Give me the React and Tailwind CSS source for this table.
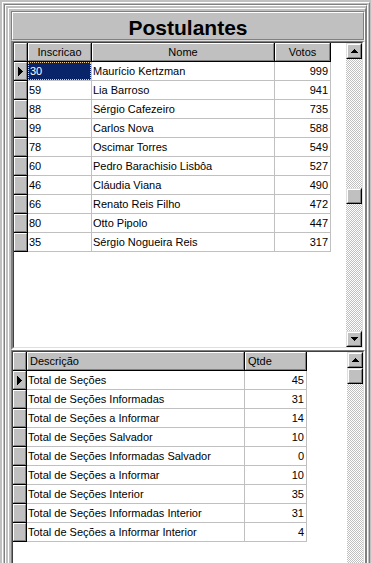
import React from "react";

const postulantes = [
  ["30", "Maurício Kertzman", "999"],
  ["59", "Lia Barroso", "941"],
  ["88", "Sérgio Cafezeiro", "735"],
  ["99", "Carlos Nova", "588"],
  ["78", "Oscimar Torres", "549"],
  ["60", "Pedro Barachisio Lisbôa", "527"],
  ["46", "Cláudia Viana", "490"],
  ["66", "Renato Reis Filho", "472"],
  ["80", "Otto Pipolo", "447"],
  ["35", "Sérgio Nogueira Reis", "317"],
];

const resumo = [
  ["Total de Seções", "45"],
  ["Total de Seções Informadas", "31"],
  ["Total de Seções a Informar", "14"],
  ["Total de Seções Salvador", "10"],
  ["Total de Seções Informadas Salvador", "0"],
  ["Total de Seções a Informar", "10"],
  ["Total de Seções Interior", "35"],
  ["Total de Seções Informadas Interior", "31"],
  ["Total de Seções a Informar Interior", "4"],
];

// fixed (grey 3D) cell used for titles and the row indicator
const Fixed = ({ w, align = "justify-center", children }) => (
  <div className={`shrink-0 h-full bg-[#c0c0c0] border-r border-b border-black ${w}`}>
    <div className={`flex h-full items-center border border-t-white border-l-white border-r-[#808080] border-b-[#808080] px-[2px] pt-px whitespace-nowrap ${align}`}>
      {children}
    </div>
  </div>
);

const Cell = ({ w, right, selected, children }) => (
  <div className={`shrink-0 h-full border-r border-b border-[#c0c0c0] ${w}`}>
    <div
      className={`flex h-full items-center px-[1px] pt-px whitespace-nowrap ${right ? "justify-end pr-[2px]" : ""} ${
        selected ? "bg-[#0a246a] text-white border border-dotted border-[#f0d09a]" : ""
      }`}
    >
      {children}
    </div>
  </div>
);

const Arrow = ({ up }) => (
  <svg width="7" height="4" viewBox="0 0 7 4" shapeRendering="crispEdges">
    {up ? (
      <>
        <rect x="3" y="0" width="1" height="1" />
        <rect x="2" y="1" width="3" height="1" />
        <rect x="1" y="2" width="5" height="1" />
        <rect x="0" y="3" width="7" height="1" />
      </>
    ) : (
      <>
        <rect x="0" y="0" width="7" height="1" />
        <rect x="1" y="1" width="5" height="1" />
        <rect x="2" y="2" width="3" height="1" />
        <rect x="3" y="3" width="1" height="1" />
      </>
    )}
  </svg>
);

const Btn = ({ children }) => (
  <div className="w-4 h-4 shrink-0 bg-[#c0c0c0] border border-t-[#dfdfdf] border-l-[#dfdfdf] border-r-black border-b-black">
    <div className="flex h-full w-full items-center justify-center border border-t-white border-l-white border-r-[#808080] border-b-[#808080]">
      {children}
    </div>
  </div>
);

const Track = ({ h }) => (
  <div
    className={`w-4 bg-[repeating-conic-gradient(#c0c0c0_0%_25%,#ffffff_0%_50%)] bg-[length:2px_2px] ${h}`}
  />
);

const Pointer = () => (
  <svg className="ml-px -mt-px" width="5" height="9" viewBox="0 0 5 9" shapeRendering="crispEdges">
    <path d="M0 0h1v9H0zM1 1h1v7H1zM2 2h1v5H2zM3 3h1v3H3zM4 4h1v1H4z" fill="black" />
  </svg>
);

export default function App() {
  return (
    <div className="w-[371px] h-[563px] overflow-hidden bg-[#c0c0c0] pt-[2px] pl-[2px] pr-[1px] font-['Liberation_Sans',Arial,sans-serif] text-[11px] text-black">
      <div className="border-t border-l border-r border-t-white border-l-white border-r-[#808080] p-[1px] pb-0">
        <div className="border-t border-l border-r border-t-[#808080] border-l-[#808080] border-r-white">
          <div className="border-t border-l border-r border-t-white border-l-white border-r-[#808080] pt-[2px] pl-[2px]">
            <div className="border-t border-l border-r border-t-white border-l-white border-r-[#808080] pt-[2px] pl-[2px]">
              {/* title */}
              <div className="h-[30px] border border-t-[#808080] border-l-[#808080] border-r-white border-b-[#dfdfdf]">
                <div className="flex h-full items-center justify-center border border-t-white border-l-white border-r-[#808080] border-b-[#808080] pt-[2px]">
                  <span className="text-[21px] font-bold leading-none">Postulantes</span>
                </div>
              </div>

              {/* postulantes grid */}
              <div className="border-2 border-t-[#808080] border-l-[#808080] border-r-white border-b-white border-t-[1px]">
                <div className="flex h-[306px] border-t border-l border-r border-b border-t-[#404040] border-l-[#404040] border-r-[#dfdfdf] border-b-[#dfdfdf]">
                  <div className="flex-1 bg-white">
                    <div className="flex h-[19px]">
                      <Fixed w="w-[14px]" />
                      <Fixed w="w-[64px]">Inscricao</Fixed>
                      <Fixed w="w-[183px]">Nome</Fixed>
                      <Fixed w="w-[56px]">Votos</Fixed>
                    </div>
                    {postulantes.map((r, i) => (
                      <div key={r[0]} className="flex h-[19px]">
                        <Fixed w="w-[14px]" align="justify-start">
                          {i === 0 && <Pointer />}
                        </Fixed>
                        <Cell w="w-[64px]" selected={i === 0}>{r[0]}</Cell>
                        <Cell w="w-[183px]">{r[1]}</Cell>
                        <Cell w="w-[56px]" right>{r[2]}</Cell>
                      </div>
                    ))}
                  </div>
                  <div className="flex w-4 flex-col">
                    <Btn><Arrow up /></Btn>
                    <Track h="h-[129px]" />
                    <Btn />
                    <Track h="flex-1" />
                    <Btn><Arrow /></Btn>
                  </div>
                </div>
              </div>

              {/* resumo grid */}
              <div className="border-t border-l border-r border-t-[#808080] border-l-[#808080] border-r-white">
                <div className="flex h-[230px] border-t border-l border-r border-t-[#404040] border-l-[#404040] border-r-[#dfdfdf]">
                  <div className="flex-1 bg-white">
                    <div className="flex h-[19px]">
                      <Fixed w="w-[14px]" />
                      <Fixed w="w-[218px]" align="justify-start">Descrição</Fixed>
                      <Fixed w="w-[62px]" align="justify-start">Qtde</Fixed>
                    </div>
                    {resumo.map((r, i) => (
                      <div key={i} className="flex h-[19px]">
                        <Fixed w="w-[14px]" align="justify-start">
                          {i === 0 && <Pointer />}
                        </Fixed>
                        <Cell w="w-[218px]">{r[0]}</Cell>
                        <Cell w="w-[62px]" right>{r[1]}</Cell>
                      </div>
                    ))}
                  </div>
                  <div className="flex w-4 flex-col">
                    <Btn><Arrow up /></Btn>
                    <Btn />
                    <Track h="flex-1" />
                  </div>
                </div>
              </div>
            </div>
          </div>
        </div>
      </div>
    </div>
  );
}
